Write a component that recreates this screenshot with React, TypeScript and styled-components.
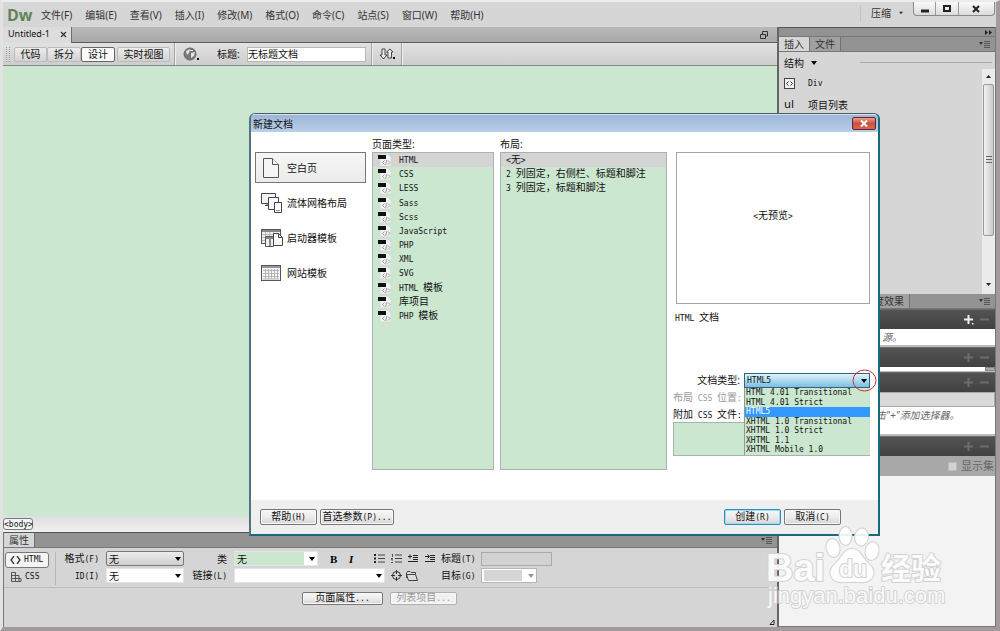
import React from "react";
import styled, { createGlobalStyle, css } from "styled-components";

const cjk = `"Noto Sans", "Noto Sans CJK SC", sans-serif`;
const mono = `"DejaVu Sans Mono", "Noto Sans CJK SC", monospace`;
const green = "#cbe7cf";

const Global = createGlobalStyle`
  * { box-sizing: border-box; }
  body { margin: 0; background: #d6d6d6; color: #111; font: 10px/14px ${cjk}; }
  button, input, select { font: inherit; color: inherit; margin: 0; }
  ul { list-style: none; margin: 0; padding: 0; }
  svg { display: block; flex: none; }
`;

/* Latin runs use a narrow fixed-pitch face next to the larger ideographs. */
const Latin = styled.span`
  font-family: ${mono};
  font-size: 8px;
`;

const Mixed = ({ text }: { text: string }) => (
  <>
    {text.split(/([\x20-\x7e]+)/).map((part, i) =>
      i % 2 ? <Latin key={i}>{part}</Latin> : part
    )}
  </>
);

/* ---------- application frame ---------- */

const Frame = styled.div`
  position: relative;
  display: flex;
  flex-direction: column;
  min-height: 100vh;
  border-style: solid;
  border-width: 2px 4px 4px 3px;
  border-color: #ececec #a29a9c #a29a9c #e2e2e2;
  overflow: hidden;
  white-space: nowrap;
`;

const MenuBar = styled.header`
  display: flex;
  align-items: center;
  height: 25px;
  padding-left: 4px;
  background: #d6d6d6;
`;

const Brand = styled.span`
  width: 34px;
  color: #64825a;
  font: bold 16px/20px "Open Sans", sans-serif;
`;

const Menus = styled.nav`
  display: flex;
  gap: 13px;
  flex: 1;
`;

const MenuButton = styled.button`
  border: 0;
  padding: 0;
  background: none;
  color: #333;
  line-height: 16px;
`;

const Workspace = styled.button`
  display: flex;
  align-items: center;
  gap: 8px;
  height: 16px;
  border: 0;
  border-left: 1px solid #c2c2c2;
  padding: 0 10px 0 10px;
  margin-bottom: 4px;
  background: none;
  color: #333;
`;

const WindowButtons = styled.div`
  display: flex;
  align-self: flex-start;
  width: 82px;
  height: 14px;
  margin-right: 1px;
  border: 1px solid #8a8a8a;
  border-top: 0;
  border-radius: 0 0 4px 4px;
  background: linear-gradient(#fafafa, #dcdcdc);
`;

const WindowButton = styled.button<{ $wide?: boolean }>`
  display: flex;
  justify-content: center;
  align-items: center;
  flex: ${(p) => (p.$wide ? 5 : 3)};
  border: 0;
  padding: 0;
  background: none;
  & + & { border-left: 1px solid #9a9a9a; }
`;

const Columns = styled.div`
  display: flex;
  flex: 1;
`;

const DocumentColumn = styled.main`
  display: flex;
  flex-direction: column;
  flex: 1;
  min-width: 0;
`;

const TabStrip = styled.div`
  display: flex;
  align-items: center;
  justify-content: space-between;
  height: 16px;
  padding-right: 9px;
  background: linear-gradient(#b9b9b9, #a9a9a9);
  border-bottom: 1px solid #5c5c5c;
`;

const DocTab = styled.div`
  display: flex;
  align-items: center;
  justify-content: space-between;
  width: 69px;
  height: 16px;
  padding: 0 4px 1px 5px;
  border-right: 1px solid #6d6d6d;
  background: #dcdcdc;
  font-size: 9px;
`;

const IconButton = styled.button<{ $w?: number }>`
  display: flex;
  align-items: center;
  justify-content: center;
  width: ${(p) => (p.$w ? p.$w + "px" : "auto")};
  border: 0;
  padding: 0;
  background: none;
`;

const Toolbar = styled.div`
  display: flex;
  align-items: center;
  height: 23px;
  padding-left: 3px;
  background: linear-gradient(#e2e2e2, #cdcdcd);
  border-bottom: 1px solid #868686;
`;

const Grip = styled.span`
  width: 4px;
  height: 15px;
  margin-right: 4px;
  border: dotted #9c9c9c;
  border-width: 0 1px;
`;

const ViewButton = styled.button<{ $w: number; $active?: boolean }>`
  width: ${(p) => p.$w}px;
  height: 15px;
  padding: 0;
  border: 1px solid ${(p) => (p.$active ? "#666" : "#bbb")};
  border-radius: 2px;
  background: ${(p) => (p.$active ? "#fafafa" : "linear-gradient(#ececec, #d2d2d2)")};
  line-height: 12px;
`;

const Rule = styled.span`
  width: 2px;
  height: 22px;
  border-left: 1px solid #a4a4a4;
  border-right: 1px solid #efefef;
`;

const TitleLabel = styled.label`
  width: 30px;
`;

const TitleInput = styled.input`
  width: 119px;
  height: 15px;
  margin-right: 5px;
  padding: 0 0 2px;
  border: 1px solid #b8b8b8;
  background: #fff;
`;

const Canvas = styled.section`
  flex: 1;
  background: ${green};
`;

const StatusBar = styled.div`
  display: flex;
  align-items: flex-start;
  height: 16px;
  padding-top: 2px;
  background: linear-gradient(#dedede, #f0f0f0);
`;

const TagButton = styled.button`
  height: 12px;
  width: 30px;
  padding: 0;
  border: 1px solid #777;
  border-radius: 3px;
  background: #f4f4f4;
  font: 8px/9px ${mono};
`;

/* ---------- properties panel ---------- */

const Properties = styled.section`
  height: 95px;
  border-top: 1px solid #555;
  border-left: 1px solid #777;
  background: #d5d5d5;
`;

const PanelHead = styled.div`
  display: flex;
  justify-content: space-between;
  align-items: center;
  height: 15px;
  padding-right: 4px;
  border-bottom: 1px solid #777;
  background: #939393;
`;

const PanelTab = styled.button<{ $active?: boolean; $w: number }>`
  width: ${(p) => p.$w}px;
  height: 14px;
  padding: 0;
  border: 0;
  border-right: 1px solid #707070;
  background: ${(p) => (p.$active ? "#d6d6d6" : "#a0a0a0")};
  color: #333;
`;

const PropertyBody = styled.div`
  display: flex;
  height: 40px;
  border-bottom: 1px solid #bcbcbc;
`;

const ModeColumn = styled.div`
  display: flex;
  flex-direction: column;
  gap: 1px;
  width: 52px;
  margin: 4px 0 2px;
  padding-left: 1px;
  border-right: 1px solid #b8b8b8;
`;

const ModeButton = styled.button<{ $active?: boolean }>`
  display: flex;
  align-items: center;
  gap: 3px;
  width: 44px;
  height: 16px;
  padding: 0 4px;
  border: 1px solid ${(p) => (p.$active ? "#777" : "transparent")};
  border-radius: 3px;
  background: ${(p) => (p.$active ? "#f4f4f4" : "none")};
  font: 8px/14px ${mono};
`;

const Fields = styled.div`
  display: grid;
  grid-template-columns: 50px 78px 50px 207px 40px 1fr;
  grid-template-rows: 17px 17px;
  align-items: center;
  flex: 1;
  padding-top: 2px;
`;

const FieldLabel = styled.label`
  padding-right: 7px;
  text-align: right;
`;

const Tools = styled.div`
  display: flex;
  align-items: center;
`;

const Spacer = styled.span<{ $w?: number }>`
  flex: none;
  width: ${(p) => p.$w}px;
`;

const SelectBox = styled.span<{ $w: number }>`
  position: relative;
  display: block;
  width: ${(p) => p.$w}px;
  height: 15px;
  > svg { position: absolute; right: 3px; top: 6px; pointer-events: none; }
`;

const fills = {
  raised: css`border: 1px solid #777; border-radius: 2px; background: linear-gradient(#ececec, #cfcfcf);`,
  plain: css`border: 1px solid #e4e4e4; background: #fff;`,
  green: css`border: 1px solid #e4e4e4; background: linear-gradient(to right, ${green} 69px, #fff 69px);`,
  off: css`border: 1px solid #b5b5b5; background: linear-gradient(to right, #fff 2px, #d5d5d5 2px, #d5d5d5 40px, #fff 40px); box-shadow: inset 0 0 0 1px #fff;`,
  blue: css`border: 1px solid #2f6486; background: linear-gradient(#e2f3fb, #a8d8f0 55%, #7fbde0);`,
};

const Select = styled.select<{ $fill: keyof typeof fills; $latin?: boolean }>`
  appearance: none;
  display: block;
  width: 100%;
  height: 15px;
  padding: 0 2px;
  border-radius: 0;
  outline: 0;
  opacity: 1;
  line-height: 12px;
  ${(p) => fills[p.$fill]}
  ${(p) => p.$latin && css`font: 8px/13px ${mono};`}
`;

const FlatInput = styled.input`
  width: 71px;
  height: 14px;
  padding: 0;
  border: 1px solid #aaa;
  background: #d2d2d2;
`;

const PropertyFoot = styled.div`
  display: flex;
  align-items: center;
  gap: 7px;
  height: 20px;
  padding-left: 298px;
`;

const PushButton = styled.button<{ $w: number; $h?: number; $primary?: boolean }>`
  display: flex;
  align-items: center;
  justify-content: center;
  width: ${(p) => p.$w}px;
  height: ${(p) => p.$h ?? 16}px;
  padding: 0;
  border: 1px solid ${(p) => (p.$primary ? "#2b8fc0" : "#777")};
  border-radius: 2px;
  background: linear-gradient(#f6f6f6, #ececec 50%, #d6d6d6);
  box-shadow: inset 0 0 0 1px ${(p) => (p.$primary ? "#9fdcf4" : "#f8f8f8")};
  line-height: 12px;
  &:disabled { color: #999; border-color: #b0b0b0; background: #f1f1f1; }
`;

const Resize = styled.div`
  display: flex;
  justify-content: flex-end;
  padding-top: 10px;
`;

/* ---------- right dock ---------- */

const Dock = styled.aside`
  display: flex;
  flex-direction: column;
  width: 219px;
  border-left: 2px solid #666;
  border-right: 1px solid #777;
  border-bottom: 1px solid #777;
  background: #f3f3f3;
`;

const DockTop = styled.div`
  display: flex;
  justify-content: flex-end;
  align-items: center;
  height: 10px;
  padding-right: 3px;
  border-top: 1px solid #555;
  border-bottom: 1px solid #777;
  background: #929292;
`;

const TabGroup = styled.div`
  display: flex;
`;

const InsertPanel = styled.div`
  display: flex;
  flex-direction: column;
  height: 242px;
  background: #d6d6d6;
`;

const Category = styled.div`
  display: flex;
  align-items: center;
  height: 17px;
  padding: 4px 3px 0 5px;
  hr { flex: 1; margin: 0 0 0 42px; border: 0; border-top: 1px solid #aaa; }
`;

const CategoryButton = styled.button`
  display: flex;
  align-items: center;
  gap: 6px;
  border: 0;
  padding: 0;
  background: none;
`;

const InsertBody = styled.div`
  display: flex;
  flex: 1;
`;

const InsertList = styled.ul`
  flex: 1;
  padding: 4px 0 0 5px;
`;

const InsertItem = styled.li`
  display: flex;
  align-items: center;
  height: 21px;
  > :first-child { width: 24px; }
`;

const UlMark = styled.span`
  font: 11px/14px "DejaVu Sans", sans-serif;
`;

const ScrollBar = styled.div`
  display: flex;
  flex-direction: column;
  justify-content: space-between;
  width: 13px;
  background: #ebebeb;
`;

const ScrollThumb = styled.div`
  display: flex;
  align-items: center;
  justify-content: center;
  width: 11px;
  height: 152px;
  margin: 0 1px 44px;
  border: 1px solid #9a9a9a;
  border-radius: 2px;
  background: linear-gradient(to right, #f4f4f4, #c9c9c9);
`;

const DarkBar = styled.div`
  display: flex;
  justify-content: flex-end;
  align-items: center;
  gap: 6px;
  height: 20px;
  padding-right: 6px;
  border-top: 1px solid #6a6a6a;
  background: linear-gradient(#535353, #414141);
`;

const Hint = styled.div<{ $h: number; $x: number }>`
  height: ${(p) => p.$h}px;
  padding-left: ${(p) => p.$x}px;
  border-bottom: 2px solid #bdbdbd;
  background: #fff;
  color: #666;
  font-style: italic;
  line-height: 16px;
`;

const Splitter = styled.div`
  display: flex;
  justify-content: flex-end;
  height: 5px;
  background: #fff;
  border-bottom: 1px solid #bbb;
  span { width: 10px; background: #aaa; border: 1px solid #888; }
`;

const FilterRow = styled.div`
  height: 15px;
  border: 1px solid #aaa;
  background: #d9d9d9;
`;

const SetRow = styled.label`
  display: flex;
  justify-content: flex-end;
  align-items: center;
  gap: 4px;
  height: 20px;
  padding-right: 1px;
  background: #a8a8a8;
  color: #666;
  font-size: 11px;
  input { appearance: none; width: 9px; height: 9px; background: #d2d2d2; border: 1px solid #bbb; }
`;

const CornerText = styled.span`
  display: block;
  padding-right: 5px;
  text-align: right;
`;

/* ---------- new document dialog ---------- */

const Dialog = styled.section`
  position: absolute;
  left: 246px;
  top: 111px;
  width: 631px;
  border: 2px solid #17697c;
  border-top: 1px solid #4b5a66;
  border-left-color: #4f7480;
  border-radius: 6px 6px 0 0;
  background: #fff;
  overflow: hidden;
`;

const DialogTitle = styled.header`
  display: flex;
  align-items: center;
  justify-content: space-between;
  height: 18px;
  padding: 0 2px;
  border-top: 1px solid #d5e2f0;
  background: linear-gradient(#9db6d6, #b8d0e8);
  h1 { margin: 0; font: inherit; }
`;

const CloseButton = styled.button`
  display: flex;
  align-items: center;
  justify-content: center;
  width: 24px;
  height: 13px;
  padding: 0;
  border: 1px solid #63262a;
  border-radius: 2px;
  background: linear-gradient(#e7a191, #cc4e3c 50%, #d8694f);
`;

const DialogBody = styled.div`
  display: grid;
  grid-template-columns: 111px 122px 167px minmax(0, 1fr);
  gap: 0 6px;
  height: 368px;
  padding: 5px 8px 0 4px;
`;

const NavList = styled.nav`
  display: flex;
  flex-direction: column;
  gap: 4px;
  padding-top: 15px;
`;

const NavItem = styled.button<{ $active?: boolean }>`
  display: flex;
  align-items: center;
  gap: 4px;
  height: 31px;
  padding: 0 5px;
  border: 1px solid ${(p) => (p.$active ? "#777" : "transparent")};
  background: ${(p) => (p.$active ? "linear-gradient(#f6f6f6, #ebebeb)" : "none")};
  > svg { width: 22px; }
`;

const ListColumn = styled.div`
  h2 { height: 15px; margin: 0; font: inherit; }
`;

const ListPane = styled.div`
  height: 318px;
  border: 1px solid #a9b3aa;
  background: ${green};
`;

const Rows = styled.ul<{ $h: number }>`
  display: grid;
  grid-auto-rows: 1fr;
  height: ${(p) => p.$h}px;
`;

const Row = styled.li<{ $active?: boolean }>`
  display: flex;
  align-items: center;
  gap: 8px;
  padding-left: 5px;
  background: ${(p) => (p.$active ? "#d4d4d4" : "none")};
`;

const RowText = styled.span`
  line-height: 13px;
  white-space: pre;
`;

const Side = styled.div`
  display: flex;
  flex-direction: column;
  padding-top: 15px;
`;

const Preview = styled.div`
  display: flex;
  align-items: center;
  justify-content: center;
  height: 152px;
  margin-left: 3px;
  padding-bottom: 24px;
  border: 1px solid #a5a5a5;
`;

const Description = styled.p`
  flex: none;
  height: 69px;
  margin: 0;
  padding: 6px 0 0 2px;
`;

const FormRow = styled.div<{ $off?: boolean }>`
  display: grid;
  grid-template-columns: 1fr 126px;
  height: 17px;
  color: ${(p) => (p.$off ? "#999" : "inherit")};
  label { padding-right: 4px; text-align: right; }
`;

const Attached = styled.div`
  height: 34px;
  margin-top: -2px;
  border: 1px solid #a9b3aa;
  background: ${green};
`;

const Options = styled.ul`
  position: absolute;
  z-index: 1;
  top: 100%;
  left: 0;
  right: 0;
  display: grid;
  grid-auto-rows: 1fr;
  height: 67px;
  border-left: 1px solid #8aa08c;
  background: ${green};
`;

const Option = styled.li<{ $active?: boolean }>`
  padding-left: 1px;
  background: ${(p) => (p.$active ? "#3399ff" : "none")};
  color: ${(p) => (p.$active ? "#fff" : "#111")};
  font: 8px/9px ${mono};
`;

const Marker = styled.svg`
  && { position: absolute; z-index: 2; right: -7px; top: -4px; }
`;

const DialogFoot = styled.footer`
  display: flex;
  gap: 3px;
  height: 34px;
  padding: 9px 37px 0 9px;
  background: #efefef;
`;

const Push = styled.span`
  flex: 1;
`;

const Watermark = styled.svg`
  position: absolute;
  z-index: 5;
  right: 44px;
  bottom: 12px;
  pointer-events: none;
`;

/* ---------- icons ---------- */

const Caret = ({ color = "#000", w = 6 }: { color?: string; w?: number }) => (
  <svg width={w} height="4" viewBox="0 0 6 4"><path d="M0 0H6L3 4Z" fill={color} /></svg>
);

const PanelMenu = () => (
  <svg width="12" height="8" viewBox="0 0 12 8">
    <path d="M0 2H4L2 5Z" fill="#333" />
    <path d="M5 1.500H11M5 3.500H11M5 5.500H11M5 7.500H11" stroke="#555" />
  </svg>
);

const CodeFile = () => (
  <svg width="13" height="14" viewBox="0 0 13 14">
    <path d="M2 1H10L13 4V13H2Z" fill="#f2f2f2" stroke="#ccc" strokeWidth=".6" />
    <rect x="0" y="2" width="8" height="4" fill="#111" />
    <path d="M6.500 7.500L4.500 9.500L6.500 11.500M10 7.500L12 9.500L10 11.500M8.800 7L7.600 12" stroke="#888" fill="none" strokeWidth=".8" />
  </svg>
);

const BlankIcon = () => (
  <svg height="22" viewBox="0 0 22 22">
    <path d="M2.500 1.500H11.500L17.500 7.500V20.500H2.500Z" fill="#f5f5f5" stroke="#555" />
    <path d="M11.500 1.500V7.500H17.500" fill="#fff" stroke="#555" />
  </svg>
);

const FluidIcon = () => (
  <svg height="20" viewBox="0 0 22 20">
    <path d="M.5 .5H14.500V10.500H.5Z" fill="#f2f2f2" stroke="#444" />
    <path d="M4 12.500H8M6 11V12" stroke="#444" />
    <path d="M7.500 4.500H17.500V16.500H7.500Z" fill="#f8f8f8" stroke="#444" />
    <path d="M13.500 9.500H20.500V19.500H13.500Z" fill="#fafafa" stroke="#444" />
    <path d="M15 17.500H19" stroke="#999" />
  </svg>
);

const StarterIcon = () => (
  <svg height="20" viewBox="0 0 22 20">
    <rect x=".5" y="1.500" width="19" height="14" fill="#eee" stroke="#555" />
    <path d="M1 3H19" stroke="#888" strokeWidth="2" />
    <path d="M1 6.500H18M1 9.500H18M1 12.500H18M4.500 4V15M8.500 4V15M12.500 4V15" stroke="#aaa" strokeWidth=".8" />
    <path d="M4.500 8.500H12.500V18.500H4.500Z" fill="#f0f0f0" stroke="#555" />
    <path d="M5 10H12M9 11V18" stroke="#666" strokeWidth="1.500" />
    <path d="M12.500 5.500H17.500L21.500 9.500V17.500H12.500Z" fill="#fafafa" stroke="#444" />
    <path d="M17.500 5.500V9.500H21.500" fill="none" stroke="#444" />
  </svg>
);

const GridIcon = () => (
  <svg height="18" viewBox="0 0 22 18">
    <rect x=".5" y="1.500" width="19" height="15" fill="#f4f4f4" stroke="#555" />
    <path d="M1 3H19" stroke="#999" strokeWidth="2" />
    <path d="M2 6.500H18M2 9.500H18M2 12.500H18M2 15H18M4.500 5V15M7.500 5V15M10.500 5V15M13.500 5V15M16.500 5V15" stroke="#aaa" strokeWidth=".8" />
  </svg>
);

const ListIcon = ({ kind }: { kind: "ul" | "ol" | "out" | "in" }) => (
  <svg width="11" height="9" viewBox="0 0 11 9">
    {kind === "ul" && <path d="M0 0H2V2H0ZM0 3.500H2V5.500H0ZM0 7H2V9H0Z" fill="#222" />}
    {kind === "ol" && <path d="M.5 0H1.500V3M0 4.500H1.500L.5 6H2M0 8.500H2" stroke="#333" fill="none" strokeWidth=".8" />}
    {(kind === "ul" || kind === "ol") && <path d="M4 1H11M4 4.500H11M4 8H11" stroke="#444" />}
    {kind === "out" && <path d="M0 2.500H4M2 .5V4.500" stroke="#222" />}
    {kind === "in" && <path d="M0 2.500H4M2.500 .5L4.500 2.500L2.500 4.500" stroke="#222" fill="none" />}
    {(kind === "out" || kind === "in") && <path d="M5 1.500H10M5 3.500H10M5 5.500H10M0 7.500H10" stroke="#222" />}
  </svg>
);

const PlusMinus = ({ lit }: { lit?: boolean }) => (
  <>
    <svg width="10" height="10" viewBox="0 0 10 10">
      <path d="M4.500 0V9M0 4.500H9" stroke={lit ? "#f0f0f0" : "#6d6d6d"} strokeWidth="2" />
      {lit && <rect x="8" y="8" width="1.500" height="1.500" fill="#fff" />}
    </svg>
    <svg width="9" height="10" viewBox="0 0 9 10"><path d="M0 4.500H9" stroke="#6d6d6d" strokeWidth="2" /></svg>
  </>
);

/* ---------- data ---------- */

const menus = ["文件(F)", "编辑(E)", "查看(V)", "插入(I)", "修改(M)", "格式(O)", "命令(C)", "站点(S)", "窗口(W)", "帮助(H)"];
const pageTypes = ["HTML", "CSS", "LESS", "Sass", "Scss", "JavaScript", "PHP", "XML", "SVG", "HTML 模板", "库项目", "PHP 模板"];
const layouts = ["<无>", "2 列固定，右侧栏、标题和脚注", "3 列固定，标题和脚注"];
const docTypes = ["HTML 4.01 Transitional", "HTML 4.01 Strict", "HTML5", "XHTML 1.0 Transitional", "XHTML 1.0 Strict", "XHTML 1.1", "XHTML Mobile 1.0"];
const categories = [
  { label: "空白页", icon: <BlankIcon /> },
  { label: "流体网格布局", icon: <FluidIcon /> },
  { label: "启动器模板", icon: <StarterIcon /> },
  { label: "网站模板", icon: <GridIcon /> },
];

/* ---------- sections ---------- */

const TopMenu = () => (
  <MenuBar>
    <Brand>Dw</Brand>
    <Menus>{menus.map((m) => <MenuButton key={m}>{m}</MenuButton>)}</Menus>
    <Workspace>压缩 <Caret color="#333" w={4} /></Workspace>
    <WindowButtons>
      <WindowButton aria-label="最小化"><svg width="8" height="8"><path d="M0 6H8" stroke="#222" strokeWidth="3" /></svg></WindowButton>
      <WindowButton aria-label="最大化"><svg width="8" height="8"><rect x="1" y="1" width="6" height="5" fill="none" stroke="#222" strokeWidth="2" /></svg></WindowButton>
      <WindowButton $wide aria-label="关闭"><svg width="8" height="8"><path d="M1 1L7 7M7 1L1 7" stroke="#222" strokeWidth="2" /></svg></WindowButton>
    </WindowButtons>
  </MenuBar>
);

const DocumentToolbar = () => (
  <Toolbar>
    <Grip />
    <ViewButton $w={33}>代码</ViewButton>
    <ViewButton $w={34}>拆分</ViewButton>
    <ViewButton $w={34} $active>设计</ViewButton>
    <Spacer $w={2} />
    <ViewButton $w={53}>实时视图</ViewButton>
    <Spacer $w={4} />
    <Rule />
    <IconButton $w={30} aria-label="预览">
      <svg width="17" height="14" viewBox="0 0 17 14">
        <circle cx="7" cy="7" r="6" fill="#777" stroke="#666" />
        <path d="M3 4L7 2L6 6L4 8ZM8 6L12 5L11 9L8 11Z" fill="#e4e4e4" />
        <path d="M7 3.500H10" stroke="#fff" />
        <rect x="14" y="11" width="2" height="2" fill="#111" />
      </svg>
    </IconButton>
    <Spacer $w={11} />
    <TitleLabel htmlFor="doc-title">标题:</TitleLabel>
    <TitleInput id="doc-title" defaultValue="无标题文档" />
    <Rule />
    <IconButton $w={28} aria-label="文件管理">
      <svg width="17" height="12" viewBox="0 0 17 12">
        <path d="M3 1V7H1L4.500 11L8 7H6V1ZM9 10V4H7.500L11 1L14 4H12.500V10Z" fill="#eee" stroke="#333" strokeWidth=".9" />
        <rect x="14" y="9" width="2" height="2" fill="#111" />
      </svg>
    </IconButton>
    <Rule />
  </Toolbar>
);

const PropertyInspector = () => (
  <Properties>
    <PanelHead>
      <PanelTab $active $w={31}>属性</PanelTab>
      <PanelMenu />
    </PanelHead>
    <PropertyBody>
      <ModeColumn>
        <ModeButton $active>
          <svg width="11" height="8" viewBox="0 0 11 8"><path d="M4 0L1 4L4 8M7 0L10 4L7 8" stroke="#333" fill="none" strokeWidth="1.300" /></svg>
          HTML
        </ModeButton>
        <ModeButton>
          <svg width="12" height="10" viewBox="0 0 12 10"><path d="M1.500 .5H5.500V9.500H1.500ZM1.500 3.500H9V9.500H5.500M1.500 6.500H11V9.500H9" stroke="#555" fill="none" /></svg>
          CSS
        </ModeButton>
      </ModeColumn>
      <Fields>
        <FieldLabel htmlFor="p-format"><Mixed text="格式(F)" /></FieldLabel>
        <SelectBox $w={78}><Select id="p-format" $fill="raised"><option>无</option></Select><Caret /></SelectBox>
        <FieldLabel htmlFor="p-class">类</FieldLabel>
        <Tools>
          <SelectBox $w={84}><Select id="p-class" $fill="green"><option>无</option></Select><Caret /></SelectBox>
          <Spacer $w={8} />
          <IconButton $w={17} aria-label="粗体"><svg width="9" height="10"><text x="0" y="9" fontFamily="Liberation Serif" fontWeight="bold" fontSize="11">B</text></svg></IconButton>
          <IconButton $w={17} aria-label="斜体"><svg width="9" height="10"><text x="2" y="9" fontFamily="Liberation Serif" fontWeight="bold" fontStyle="italic" fontSize="11">I</text></svg></IconButton>
          <Spacer $w={11} />
          <IconButton $w={17} aria-label="项目列表"><ListIcon kind="ul" /></IconButton>
          <IconButton $w={17} aria-label="编号列表"><ListIcon kind="ol" /></IconButton>
          <IconButton $w={17} aria-label="减少缩进"><ListIcon kind="out" /></IconButton>
          <IconButton $w={17} aria-label="增加缩进"><ListIcon kind="in" /></IconButton>
        </Tools>
        <FieldLabel htmlFor="p-title"><Mixed text="标题(T)" /></FieldLabel>
        <FlatInput id="p-title" />
        <FieldLabel htmlFor="p-id"><Mixed text="ID(I)" /></FieldLabel>
        <SelectBox $w={78}><Select id="p-id" $fill="plain"><option>无</option></Select><Caret /></SelectBox>
        <FieldLabel htmlFor="p-link"><Mixed text="链接(L)" /></FieldLabel>
        <Tools>
          <SelectBox $w={151}><Select id="p-link" $fill="plain" /><Caret /></SelectBox>
          <Spacer $w={4} />
          <IconButton $w={14} aria-label="指向文件">
            <svg width="11" height="11" viewBox="0 0 11 11"><circle cx="5.500" cy="5.500" r="4" fill="none" stroke="#333" /><path d="M5.500 0V4M5.500 7V11M0 5.500H4M7 5.500H11" stroke="#333" /></svg>
          </IconButton>
          <IconButton $w={16} aria-label="浏览文件">
            <svg width="13" height="10" viewBox="0 0 13 10"><path d="M1.500 7V2L2.500 .5H5L6 1.500H10.500V3.500M3.500 9.500L1.500 3.500H10.500L12.500 9.500Z" fill="#ddd" stroke="#444" /></svg>
          </IconButton>
        </Tools>
        <FieldLabel htmlFor="p-target"><Mixed text="目标(G)" /></FieldLabel>
        <SelectBox $w={56}><Select id="p-target" $fill="off" disabled /><Caret color="#999" /></SelectBox>
      </Fields>
    </PropertyBody>
    <PropertyFoot>
      <PushButton $w={81} $h={13}><span><Mixed text="页面属性..." /></span></PushButton>
      <PushButton $w={67} $h={13} disabled><span><Mixed text="列表项目..." /></span></PushButton>
    </PropertyFoot>
    <Resize><svg width="8" height="8" viewBox="0 0 8 8"><path d="M1 6.500L5 2V6.500Z" fill="#eee" stroke="#222" /></svg></Resize>
  </Properties>
);

const RightDock = () => (
  <Dock>
    <DockTop>
      <svg width="7" height="5" viewBox="0 0 7 5"><path d="M0 0L3 2.500L0 5ZM4 0L7 2.500L4 5Z" fill="#222" /></svg>
    </DockTop>
    <PanelHead>
      <TabGroup>
        <PanelTab $active $w={31}>插入</PanelTab>
        <PanelTab $w={31}>文件</PanelTab>
      </TabGroup>
      <PanelMenu />
    </PanelHead>
    <InsertPanel>
      <Category>
        <CategoryButton>结构 <Caret w={8} /></CategoryButton>
        <hr />
      </Category>
      <InsertBody>
        <InsertList>
          <InsertItem>
            <span>
              <svg width="12" height="12" viewBox="0 0 12 12"><rect x=".5" y=".5" width="10" height="10" fill="#eee" stroke="#444" /><path d="M4.500 3.500L2.500 5.500L4.500 7.500M6.500 3.500L8.500 5.500L6.500 7.500" stroke="#333" fill="none" /></svg>
            </span>
            <Latin>Div</Latin>
          </InsertItem>
          <InsertItem><UlMark>ul</UlMark>项目列表</InsertItem>
        </InsertList>
        <ScrollBar>
          <IconButton aria-label="向上滚动"><svg width="13" height="13" viewBox="0 0 13 13"><path d="M4 9H9L6.500 6Z" fill="#222" /></svg></IconButton>
          <ScrollThumb><svg width="6" height="7"><path d="M0 .5H6M0 3.500H6M0 6.500H6" stroke="#666" /></svg></ScrollThumb>
          <IconButton aria-label="向下滚动"><svg width="13" height="13" viewBox="0 0 13 13"><path d="M4 2H9L6.500 5Z" fill="#222" /></svg></IconButton>
        </ScrollBar>
      </InsertBody>
    </InsertPanel>
    <PanelHead>
      <PanelTab $w={131}><CornerText>度效果</CornerText></PanelTab>
      <PanelMenu />
    </PanelHead>
    <DarkBar><PlusMinus lit /></DarkBar>
    <Hint $h={18} $x={103}>源。</Hint>
    <DarkBar><PlusMinus /></DarkBar>
    <Splitter><span /></Splitter>
    <DarkBar><PlusMinus /></DarkBar>
    <FilterRow />
    <Hint $h={29} $x={97}>击"+"添加选择器。</Hint>
    <DarkBar><PlusMinus /></DarkBar>
    <SetRow><input type="checkbox" />显示集</SetRow>
  </Dock>
);

const NewDocument = () => (
  <Dialog role="dialog" aria-labelledby="dlg-title">
    <DialogTitle>
      <h1 id="dlg-title">新建文档</h1>
      <CloseButton aria-label="关闭"><svg width="8" height="7" viewBox="0 0 8 7"><path d="M1 .5L7 6.500M7 .5L1 6.500" stroke="#fff" strokeWidth="2" /></svg></CloseButton>
    </DialogTitle>
    <DialogBody>
      <NavList>
        {categories.map((c, i) => <NavItem key={c.label} $active={i === 0}>{c.icon}{c.label}</NavItem>)}
      </NavList>
      <ListColumn>
        <h2>页面类型:</h2>
        <ListPane>
          <Rows $h={170}>
            {pageTypes.map((t, i) => <Row key={t} $active={i === 0}><CodeFile /><RowText><Mixed text={t} /></RowText></Row>)}
          </Rows>
        </ListPane>
      </ListColumn>
      <ListColumn>
        <h2>布局:</h2>
        <ListPane>
          <Rows $h={41}>
            {layouts.map((t, i) => <Row key={t} $active={i === 0}><RowText><Mixed text={t} /></RowText></Row>)}
          </Rows>
        </ListPane>
      </ListColumn>
      <Side>
        <Preview><span><Mixed text="<无预览>" /></span></Preview>
        <Description><Mixed text="HTML 文档" /></Description>
        <FormRow>
          <label htmlFor="d-type">文档类型:</label>
          <SelectBox $w={126}>
            <Select id="d-type" $fill="blue" $latin><option>HTML5</option></Select>
            <Caret />
            <Options role="listbox">
              {docTypes.map((t) => <Option key={t} role="option" $active={t === "HTML5"}>{t}</Option>)}
            </Options>
            <Marker width="25" height="23" viewBox="0 0 25 23"><ellipse cx="12.500" cy="11.500" rx="11.500" ry="10.500" fill="none" stroke="#d42a3c" /></Marker>
          </SelectBox>
        </FormRow>
        <FormRow $off><label><Mixed text="布局 CSS 位置:" /></label></FormRow>
        <FormRow><label><Mixed text="附加 CSS 文件:" /></label></FormRow>
        <Attached />
      </Side>
    </DialogBody>
    <DialogFoot>
      <PushButton $w={57}><span><Mixed text="帮助(H)" /></span></PushButton>
      <PushButton $w={74}><span><Mixed text="首选参数(P)..." /></span></PushButton>
      <Push />
      <PushButton $w={57} $primary><span><Mixed text="创建(R)" /></span></PushButton>
      <PushButton $w={57}><span><Mixed text="取消(C)" /></span></PushButton>
    </DialogFoot>
  </Dialog>
);

const BaiduMark = () => (
  <Watermark width="186" height="90" viewBox="0 0 186 90">
    <g fill="#fff" fillOpacity=".9" stroke="#d2d2d2" strokeWidth="2" paintOrder="stroke" strokeLinejoin="round">
      <text x="0" y="56" fontFamily="Liberation Sans" fontWeight="bold" fontSize="38">Bai</text>
      <ellipse cx="67" cy="23" rx="6.500" ry="9" transform="rotate(-12 67 23)" />
      <ellipse cx="79.500" cy="11" rx="6" ry="9" />
      <ellipse cx="95.500" cy="12" rx="6.500" ry="8.500" transform="rotate(8 95.500 12)" />
      <ellipse cx="106" cy="26" rx="6.500" ry="9" transform="rotate(10 106 26)" />
      <path d="M86 24C78 24 76 32 71 37C66 41 63 46 65 51C68 59 78 57 86 57C94 57 104 59 107 51C109 46 106 41 101 37C96 32 94 24 86 24Z" />
      <text x="73" y="52" fontFamily="Liberation Sans" fontWeight="bold" fontSize="23">du</text>
      <text x="115" y="54" fontFamily="Noto Sans CJK SC" fontWeight="bold" fontSize="30">经验</text>
      <text x="2" y="78" fontFamily="Liberation Sans" fontSize="22">jingyan.baidu.com</text>
    </g>
  </Watermark>
);

export default function App() {
  return (
    <Frame>
      <Global />
      <TopMenu />
      <Columns>
        <DocumentColumn>
          <TabStrip>
            <DocTab>
              Untitled-1
              <IconButton aria-label="关闭文档"><svg width="7" height="7" viewBox="0 0 7 7"><path d="M1 1L6 6M6 1L1 6" stroke="#333" strokeWidth="1.200" /></svg></IconButton>
            </DocTab>
            <IconButton aria-label="还原"><svg width="8" height="8" viewBox="0 0 8 8"><path d="M2.500 3V.5H7.500V5H5.500M.5 3.500H5.500V7.500H.5Z" fill="none" stroke="#333" /></svg></IconButton>
          </TabStrip>
          <DocumentToolbar />
          <Canvas />
          <StatusBar><TagButton>&lt;body&gt;</TagButton></StatusBar>
          <PropertyInspector />
        </DocumentColumn>
        <RightDock />
      </Columns>
      <NewDocument />
      <BaiduMark />
    </Frame>
  );
}
